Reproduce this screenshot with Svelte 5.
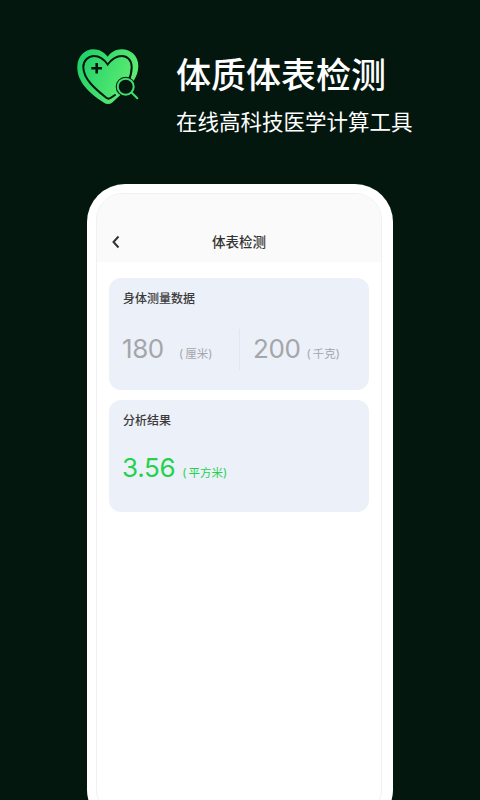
<script lang="ts">
    const measures = [
        { value: "180", unit: "(\u2009厘米)" },
        { value: "200", unit: "(\u2009千克)" },
    ];
</script>

<main>
    <header>
        <svg class="logo" width="64" height="60" viewBox="0 0 64 60" fill="none">
            <defs>
                <linearGradient id="heart" x1="0" y1="0.2" x2="1" y2="0.6">
                    <stop offset="0" stop-color="#1fd06a" />
                    <stop offset="1" stop-color="#62ee72" />
                </linearGradient>
            </defs>
            <path d="M32 56C29 56 27 54 24 52C14 45 1 34 1.300 18.700C1.500 8 9 1.300 17.300 1.300C23 1.300 28 4 31.700 8.700C35 4 40 1.300 45.700 1.300C55 1.300 62.300 8 62.300 18C62.300 28 56 36 50 42L40 51C37 54 35 56 32 56Z" fill="url(#heart)" />
            <path d="M52 34C54 30 55.700 25 55.700 19C55.700 12 51 8 46 8C40 8 35 12 31.700 16.500C28.500 12 24 8 18 8C12 8 7.300 13 7.300 19C7.300 32 22 43 30 49.500C31.500 50.800 33 51 34.500 50L39 47" stroke="#04170f" stroke-width="2" stroke-linecap="round" />
            <path d="M20.700 15V25.500M15.300 20.300H26" stroke="#04170f" stroke-width="2.600" />
            <circle cx="49.700" cy="38.700" r="10" fill="#04170f" />
            <circle cx="49.700" cy="38.700" r="8" stroke="#3fe070" stroke-width="2" />
            <path d="M55.500 44.500L61.300 50.300" stroke="#3fe070" stroke-width="2" stroke-linecap="round" />
        </svg>
        <div class="headline">
            <h1>体质体表检测</h1>
            <p>在线高科技医学计算工具</p>
        </div>
    </header>

    <div class="phone">
        <div class="screen">
            <div class="nav">
                <svg class="back" width="10" height="14" viewBox="0 0 10 14" fill="none">
                    <path d="M7.500 1.500L2.500 7L7.500 12.500" stroke="#333" stroke-width="2" />
                </svg>
                <span>体表检测</span>
            </div>
            <div class="content">
                <section class="card">
                    <h2>身体测量数据</h2>
                    <div class="measures">
                        {#each measures as m}
                            <div class="measure">
                                <b>{m.value}</b>
                                <small>{m.unit}</small>
                            </div>
                        {/each}
                    </div>
                </section>
                <section class="card">
                    <h2>分析结果</h2>
                    <div class="result">
                        <b>3.56</b>
                        <small>(&#8201;平方米)</small>
                    </div>
                </section>
            </div>
        </div>
    </div>
</main>

<style>
    :global(body) {
        margin: 0;
        background: #03170f;
    }

    main {
        width: 480px;
        height: 800px;
        overflow: hidden;
        background: #03170f;
        font-family: Inter, "Noto Sans CJK SC", sans-serif;
    }

    header {
        height: 184px;
        box-sizing: border-box;
        padding: 47px 0 0 76px;
        display: flex;
        gap: 36px;
    }

    .logo {
        margin-top: 1px;
        flex: none;
    }

    h1 {
        margin: 5px 0 0;
        font-size: 35px;
        line-height: 46px;
        font-weight: 500;
        color: #fff;
        white-space: nowrap;
    }

    .headline p {
        margin: 7px 0 0;
        font-size: 21.500px;
        line-height: 34px;
        color: #fff;
        white-space: nowrap;
    }

    .phone {
        width: 306px;
        height: 642px;
        margin-left: 87px;
        box-sizing: border-box;
        padding: 9px 11px 0 9px;
        border-radius: 38px 38px 36px 36px;
        background: #fff;
    }

    .screen {
        height: 624px;
        box-sizing: border-box;
        border: 1px solid #f0f0f0;
        border-radius: 27px;
        overflow: hidden;
        background: #fff;
    }

    .nav {
        height: 68px;
        box-sizing: border-box;
        padding-top: 38px;
        position: relative;
        background: #fafafa;
        text-align: center;
        font-size: 13.500px;
        line-height: 20px;
        font-weight: 500;
        color: #333;
    }

    .back {
        position: absolute;
        left: 14px;
        top: 41px;
    }

    .content {
        padding: 16px 12px 0 12px;
        display: flex;
        flex-direction: column;
        gap: 10px;
    }

    .card {
        height: 112px;
        box-sizing: border-box;
        padding: 12px 14px;
        border-radius: 12px;
        background: #ecf0f9;
    }

    h2 {
        margin: 0;
        font-size: 12px;
        line-height: 18px;
        font-weight: 500;
        color: #3a3a3a;
    }

    .measures {
        display: flex;
        margin-top: 21px;
    }

    .measure {
        display: flex;
        align-items: baseline;
        height: 41px;
        line-height: 40px;
        white-space: nowrap;
    }

    .measure:first-child {
        width: 116px;
        border-right: 1px solid #e2e6ee;
    }

    .measure:last-child {
        padding-left: 13px;
    }

    .measure b {
        margin-left: -1px;
        font-size: 26px;
        font-weight: 400;
        letter-spacing: -0.4px;
        color: #a4a6aa;
    }

    .measure:last-child b {
        margin-left: 0;
    }

    .measure small {
        margin-left: 6px;
        font-size: 11.500px;
        color: #a4a6aa;
    }

    .measure:first-child small {
        margin-left: 15px;
    }

    .result {
        display: flex;
        align-items: baseline;
        margin-top: 21px;
        line-height: 34px;
        white-space: nowrap;
    }

    .result b {
        margin-left: -1px;
        font-size: 26px;
        font-weight: 400;
        letter-spacing: -0.3px;
        color: #24d24f;
    }

    .result small {
        margin-left: 7px;
        font-size: 11.500px;
        color: #24d24f;
    }
</style>
